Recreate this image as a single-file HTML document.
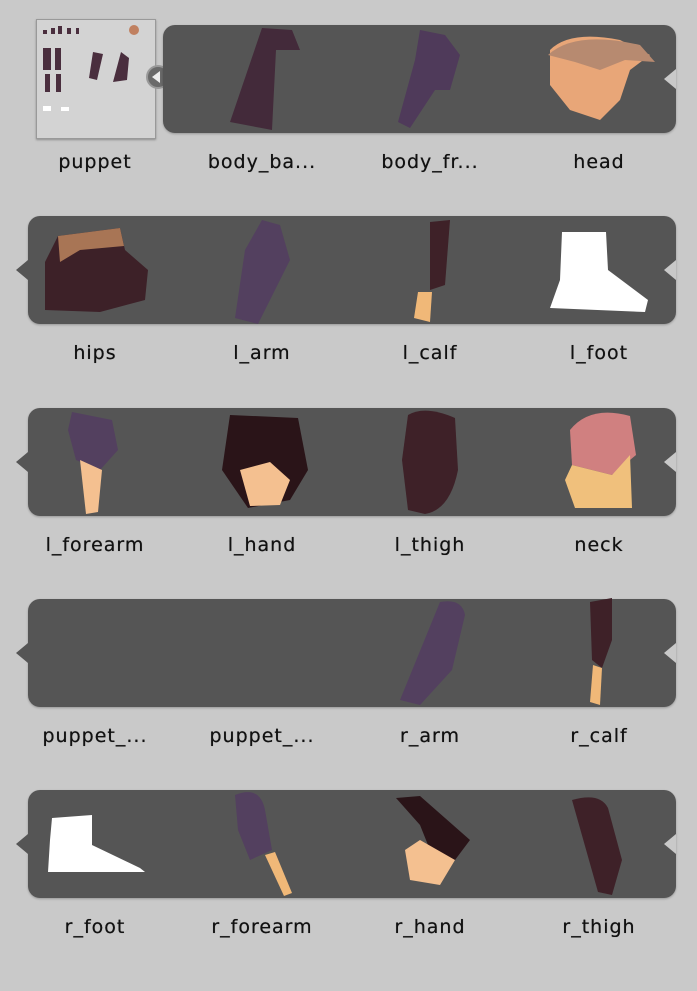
<!DOCTYPE html>
<html><head><style>
body{margin:0;width:697px;height:991px;background:#c9c9c9;position:relative;overflow:hidden;font-family:"DejaVu Sans","Liberation Sans",sans-serif}
.s{position:absolute;background:#555;border-radius:12px;height:108px;box-shadow:0 1px 2px rgba(0,0,0,.25)}
.l{position:absolute;width:160px;text-align:center;font-size:19px;letter-spacing:1px;color:#111;text-shadow:0 0 0.5px #111}
.n{position:absolute;width:0;height:0;border-top:10px solid transparent;border-bottom:10px solid transparent}
svg{position:absolute}
</style></head><body>
<div style="position:absolute;left:36px;top:19px;width:118px;height:118px;background:#d3d3d3;border:1px solid #999;box-shadow:0 1px 2px rgba(0,0,0,.3)">
<svg width="118" height="118" viewBox="0 0 118 118"><g fill="#4a2e3e"><rect x="6" y="10" width="4" height="4"/><rect x="14" y="8" width="4" height="6"/><rect x="21" y="6" width="4" height="8"/><rect x="30" y="8" width="4" height="6"/><rect x="39" y="8" width="3" height="6"/><rect x="6" y="28" width="8" height="22"/><rect x="18" y="28" width="6" height="22"/><rect x="8" y="54" width="5" height="18"/><rect x="19" y="54" width="5" height="18"/><path d="M56 32 L66 34 L60 60 L52 58Z"/><path d="M84 32 L92 38 L90 60 L76 62Z"/></g><circle cx="97" cy="10" r="5" fill="#c08060"/><rect x="6" y="86" width="8" height="5" fill="#fff"/><rect x="24" y="87" width="8" height="4" fill="#fff"/></svg></div>
<div style="position:absolute;left:146px;top:65px;width:24px;height:24px;border-radius:50%;background:#6a6a6a;border:2px solid #999;box-sizing:border-box"></div>
<div style="position:absolute;left:152px;top:71px;border-top:6px solid transparent;border-bottom:6px solid transparent;border-right:8px solid #eee;width:0;height:0"></div>

<div class="s" style="left:163px;top:25px;width:513px"></div>
<div class="s" style="left:28px;top:216px;width:648px"></div>
<div class="s" style="left:28px;top:408px;width:648px"></div>
<div class="s" style="left:28px;top:599px;width:648px"></div>
<div class="s" style="left:28px;top:790px;width:648px"></div>
<div class="n" style="left:16px;top:260px;border-right:12px solid #555"></div>
<div class="n" style="left:16px;top:452px;border-right:12px solid #555"></div>
<div class="n" style="left:16px;top:643px;border-right:12px solid #555"></div>
<div class="n" style="left:16px;top:834px;border-right:12px solid #555"></div>
<div class="n" style="left:664px;top:69px;border-right:12px solid #c9c9c9"></div>
<div class="n" style="left:664px;top:260px;border-right:12px solid #c9c9c9"></div>
<div class="n" style="left:664px;top:452px;border-right:12px solid #c9c9c9"></div>
<div class="n" style="left:664px;top:643px;border-right:12px solid #c9c9c9"></div>
<div class="n" style="left:664px;top:834px;border-right:12px solid #c9c9c9"></div>

<svg width="697" height="991" style="left:0;top:0">
<path d="M262 28 L292 30 L300 50 L276 50 L272 130 L230 122 Z" fill="#432a3a"/>
<path d="M420 30 L445 35 L460 55 L450 90 L435 90 L410 128 L398 122 L415 60 Z" fill="#4f3a5a"/>
<path d="M550 50 Q570 30 620 40 L650 55 L630 70 L620 100 L600 120 L570 110 L550 85 Z" fill="#e8a678"/>
<path d="M548 55 Q575 30 640 45 L655 62 L625 60 L600 70 L575 62 Z" fill="#b78a70"/>
<path d="M45 262 L58 236 L120 228 L125 250 L148 270 L145 300 L100 312 L45 310 Z" fill="#3d2128"/>
<path d="M58 236 L120 228 L124 246 L80 250 L60 262 Z" fill="#a87555"/>
<path d="M262 220 L280 225 L290 260 L258 324 L235 318 L245 250 Z" fill="#53405f"/>
<path d="M430 222 L450 220 L445 285 L430 290 Z" fill="#3e2128"/>
<path d="M418 292 L432 292 L430 322 L414 318 Z" fill="#f0b878"/>
<path d="M562 232 L606 232 L608 270 L648 300 L645 312 L550 308 L560 280 Z" fill="#fff"/>
<path d="M72 412 L112 420 L118 450 L100 470 L76 460 L68 430 Z" fill="#53405f"/>
<path d="M80 460 L102 470 L98 512 L86 514 Z" fill="#f4c090"/>
<path d="M230 415 L298 418 L308 470 L290 500 L248 508 L222 470 Z" fill="#2a1418"/>
<path d="M240 470 L270 462 L290 480 L280 505 L250 506 Z" fill="#f4c090"/>
<path d="M408 415 Q425 405 455 418 L458 470 Q450 510 425 514 L408 510 L402 460 Z" fill="#3e2128"/>
<path d="M570 430 Q590 405 630 416 L636 455 L612 475 L572 465 Z" fill="#d08080"/>
<path d="M572 465 L612 475 L630 455 L632 508 L575 508 L565 480 Z" fill="#f0c07c"/>
<path d="M440 602 Q462 598 465 615 L452 670 L420 705 L400 700 Z" fill="#53405f"/>
<path d="M590 602 L612 598 L612 640 L602 668 L592 660 Z" fill="#3e2128"/>
<path d="M593 665 L602 668 L600 705 L590 702 Z" fill="#f0b878"/>
<path d="M52 818 L92 815 L92 845 L140 868 L145 872 L48 872 L50 840 Z" fill="#fff"/>
<path d="M235 795 Q260 785 265 810 L272 850 L250 860 L238 830 Z" fill="#53405f"/>
<path d="M265 855 L275 852 L292 893 L284 896 Z" fill="#f0b878"/>
<path d="M396 798 L420 796 L470 840 L455 860 L430 850 L420 825 Z" fill="#2a1418"/>
<path d="M405 850 L420 840 L455 860 L440 885 L410 880 Z" fill="#f4c090"/>
<path d="M572 800 Q600 792 608 808 L622 860 L612 895 L598 892 Z" fill="#3e2128"/>
</svg>

<div class="l" style="left:15px;top:151px">puppet</div>
<div class="l" style="left:182px;top:151px">body_ba...</div>
<div class="l" style="left:350px;top:151px">body_fr...</div>
<div class="l" style="left:519px;top:151px">head</div>
<div class="l" style="left:15px;top:342px">hips</div>
<div class="l" style="left:182px;top:342px">l_arm</div>
<div class="l" style="left:350px;top:342px">l_calf</div>
<div class="l" style="left:519px;top:342px">l_foot</div>
<div class="l" style="left:15px;top:534px">l_forearm</div>
<div class="l" style="left:182px;top:534px">l_hand</div>
<div class="l" style="left:350px;top:534px">l_thigh</div>
<div class="l" style="left:519px;top:534px">neck</div>
<div class="l" style="left:15px;top:725px">puppet_...</div>
<div class="l" style="left:182px;top:725px">puppet_...</div>
<div class="l" style="left:350px;top:725px">r_arm</div>
<div class="l" style="left:519px;top:725px">r_calf</div>
<div class="l" style="left:15px;top:916px">r_foot</div>
<div class="l" style="left:182px;top:916px">r_forearm</div>
<div class="l" style="left:350px;top:916px">r_hand</div>
<div class="l" style="left:519px;top:916px">r_thigh</div>
</body></html>
